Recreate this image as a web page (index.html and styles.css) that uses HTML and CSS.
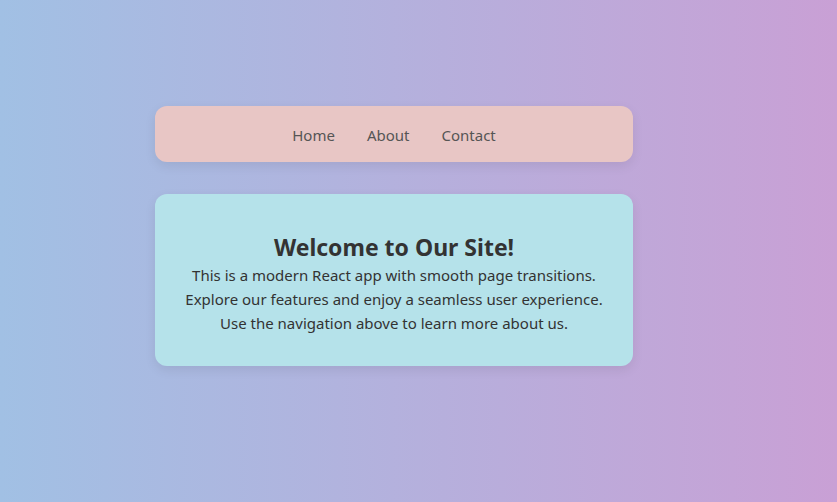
FILE: index.html
```html
<!DOCTYPE html>
<html lang="en">
<head>
<meta charset="utf-8">
<title>Welcome</title>
<link rel="stylesheet" href="styles.css">
</head>
<body>
<div class="app">
  <nav class="nav">
    <a href="#" class="nav-link">Home</a>
    <a href="#" class="nav-link">About</a>
    <a href="#" class="nav-link">Contact</a>
  </nav>
  <main class="card">
    <h1 class="title">Welcome to Our Site!</h1>
    <p class="text">This is a modern React app with smooth page transitions.<br>Explore our features and enjoy a seamless user experience.<br>Use the navigation above to learn more about us.</p>
  </main>
</div>
</body>
</html>
```
FILE: styles.css
```css
html, body {
  margin: 0;
  height: 100%;
}
body {
  background: linear-gradient(to right, #a1c0e4, #c9a0d5);
  font-family: "Noto Sans", "Open Sans", sans-serif;
  color: #333;
}
.app {
  width: 478px;
  padding: 106px 0 0 155px;
  display: flex;
  flex-direction: column;
  gap: 32px;
}
.nav {
  background: #e8c6c5;
  border-radius: 12px;
  box-shadow: 0 4px 12px rgba(0, 0, 0, 0.08);
  height: 56px;
  padding-top: 2px;
  box-sizing: border-box;
  display: flex;
  justify-content: center;
  align-items: center;
  gap: 32px;
}
.nav-link {
  color: #555;
  text-decoration: none;
  font-size: 15px;
}
.card {
  background: #b5e2ea;
  border-radius: 12px;
  box-shadow: 0 4px 12px rgba(0, 0, 0, 0.08);
  height: 172px;
  box-sizing: border-box;
  padding-top: 37px;
  text-align: center;
}
.title {
  margin: 0;
  font-size: 23px;
  line-height: 32px;
  font-weight: 700;
  color: #333;
}
.text {
  margin: 0;
  font-size: 15px;
  line-height: 24px;
}
```
